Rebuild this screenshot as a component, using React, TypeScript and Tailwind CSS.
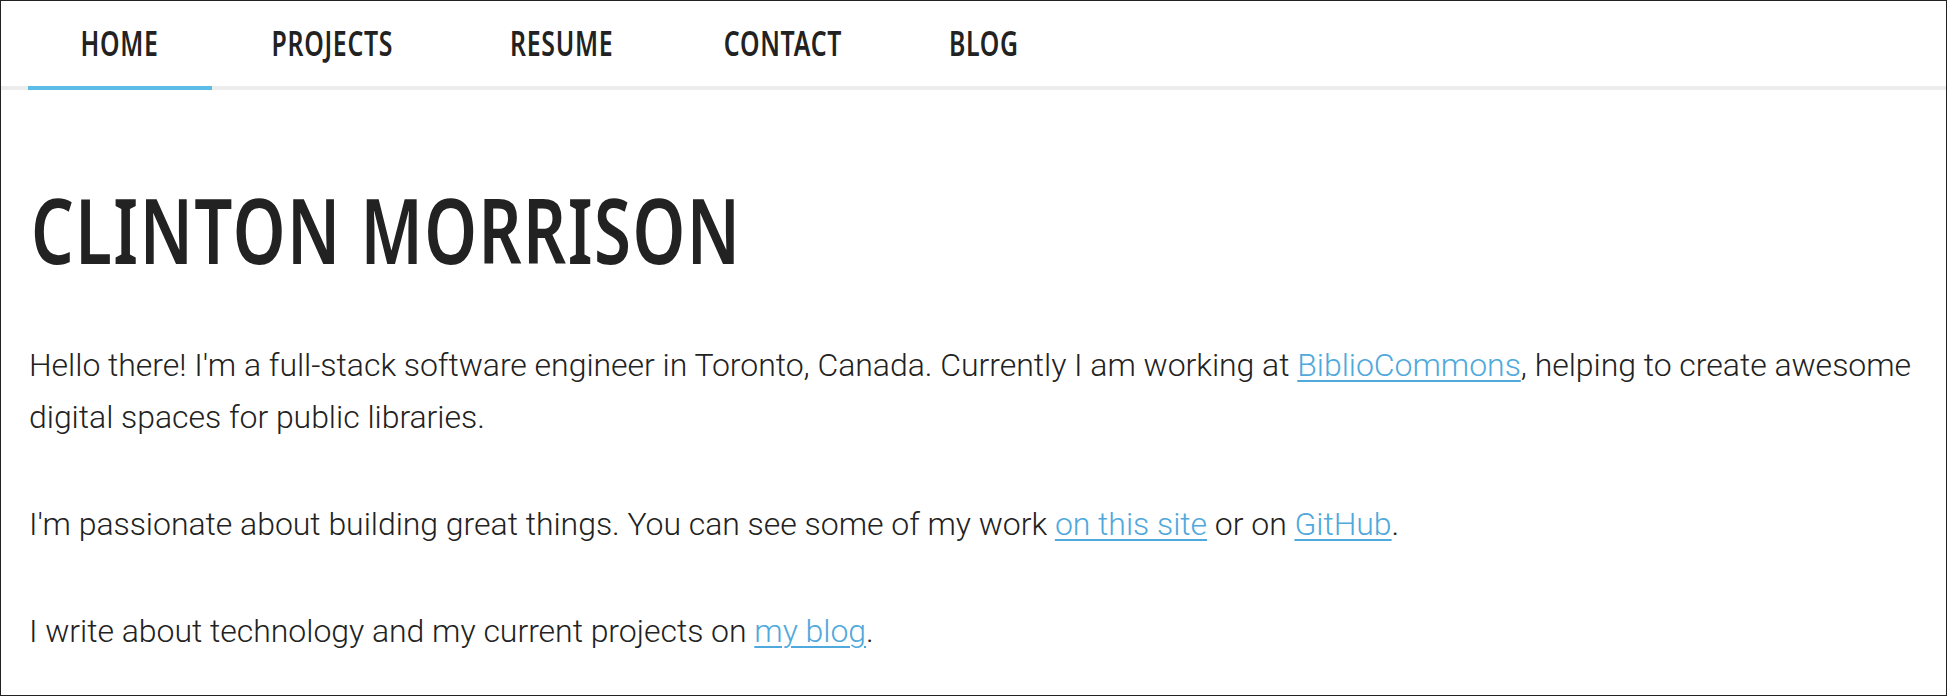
import React from "react";

// widths of each tab, text is centred in it
const navLinks = [
  { label: "HOME", width: "w-[184px]" },
  { label: "PROJECTS", width: "w-[241px]" },
  { label: "RESUME", width: "w-[218px]" },
  { label: "CONTACT", width: "w-[223px]" },
  { label: "BLOG", width: "w-[179px]" },
];

const headFont = "font-['Noto_Sans','DejaVu_Sans',sans-serif]";
const bodyFont = "font-['Roboto','Liberation_Sans',sans-serif]";

const Link = ({ children }: { children: React.ReactNode }) => (
  <a href="#" className="text-[#4fa9dc] underline decoration-2 underline-offset-[4px]">
    {children}
  </a>
);

export default function App() {
  return (
    <div className="w-[1947px] h-[696px] border border-[#222] bg-white overflow-hidden">
      {/* top navigation */}
      <nav className={`flex h-[89px] pl-[27px] border-b-4 border-[#ececec] ${headFont}`}>
        {navLinks.map((link, i) => (
          <a
            key={link.label}
            href="#"
            className={`flex h-[89px] -mb-[4px] items-center justify-center border-b-4 text-[34px] font-semibold tracking-[1px] text-[#222] ${
              link.width
            } ${i === 0 ? "border-[#5bbde8]" : "border-transparent"}`}
          >
            {/* squeeze to mimic the condensed display face */}
            <span className="inline-block scale-x-[0.73] whitespace-nowrap">{link.label}</span>
          </a>
        ))}
      </nav>

      <main className="px-[28px]">
        <h1 className={`mt-[94px] pl-[2px] text-[90px] leading-none font-semibold tracking-[2px] text-[#222] ${headFont}`}>
          <span className="inline-block origin-left scale-x-[0.745] whitespace-nowrap">CLINTON MORRISON</span>
        </h1>

        <div className={`mt-[65px] text-[32px] leading-[52px] font-light tracking-[-0.04px] text-[#222] ${bodyFont}`}>
          <p>
            Hello there! I'm a full-stack software engineer in Toronto, Canada. Currently I am working at{" "}
            <Link>BiblioCommons</Link>, helping to create awesome digital spaces for public libraries.
          </p>
          <p className="mt-[55px]">
            I'm passionate about building great things. You can see some of my work <Link>on this site</Link> or on{" "}
            <Link>GitHub</Link>.
          </p>
          <p className="mt-[55px]">
            I write about technology and my current projects on <Link>my blog</Link>.
          </p>
        </div>
      </main>
    </div>
  );
}
